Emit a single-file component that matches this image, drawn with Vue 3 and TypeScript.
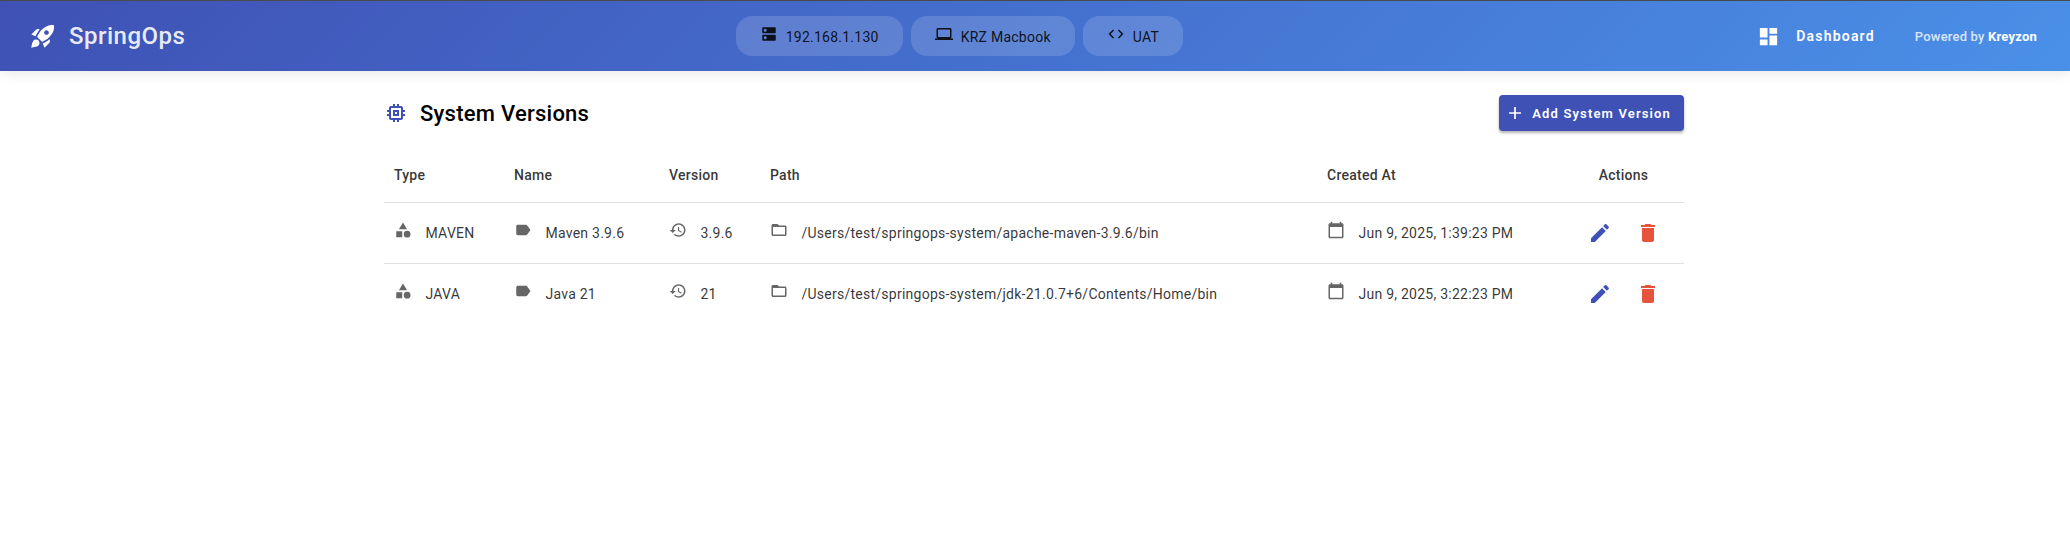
<script setup lang="ts">
interface SystemVersion {
  type: string
  name: string
  version: string
  path: string
  createdAt: string
}

const icons = {
  rocket: 'M9.19 6.35c-2.04 2.29-3.44 5.58-3.57 5.89L2 10.69l4.05-4.05c.47-.47 1.15-.68 1.81-.55l1.33.26zM11.17 17s3.74-1.55 5.89-3.7c5.4-5.4 4.5-9.62 4.21-10.57-.95-.3-5.17-1.19-10.57 4.21C8.55 9.09 7 12.83 7 12.83L11.17 17zm6.48-2.19c-2.29 2.04-5.58 3.44-5.89 3.57L13.31 22l4.05-4.05c.47-.47.68-1.15.55-1.81l-.26-1.33zM9 18c0 .83-.34 1.58-.88 2.12C6.94 21.3 2 22 2 22s.7-4.94 1.88-6.12C4.42 15.34 5.17 15 6 15c1.66 0 3 1.34 3 3zm4-9c0-1.1.9-2 2-2s2 .9 2 2-.9 2-2 2-2-.9-2-2z',
  dns: 'M20 13H4c-.55 0-1 .45-1 1v6c0 .55.45 1 1 1h16c.55 0 1-.45 1-1v-6c0-.55-.45-1-1-1zM7 19c-1.1 0-2-.9-2-2s.9-2 2-2 2 .9 2 2-.9 2-2 2zM20 3H4c-.55 0-1 .45-1 1v6c0 .55.45 1 1 1h16c.55 0 1-.45 1-1V4c0-.55-.45-1-1-1zM7 9c-1.1 0-2-.9-2-2s.9-2 2-2 2 .9 2 2-.9 2-2 2z',
  laptop: 'M20 18c1.1 0 1.99-.9 1.99-2L22 6c0-1.1-.9-2-2-2H4c-1.1 0-2 .9-2 2v10c0 1.1.9 2 2 2H0v2h24v-2h-4zM4 6h16v10H4V6z',
  code: 'M9.4 16.6L4.8 12l4.6-4.6L8 6l-6 6 6 6 1.4-1.4zm5.2 0l4.6-4.6-4.6-4.6L16 6l6 6-6 6-1.4-1.4z',
  dashboard: 'M3 13h8V3H3v10zm0 8h8v-6H3v6zm10 0h8V11h-8v10zm0-18v6h8V3h-8z',
  memory: 'M15 9H9v6h6V9zm-2 4h-2v-2h2v2zm8-2V9h-2V7c0-1.1-.9-2-2-2h-2V3h-2v2h-2V3H9v2H7c-1.1 0-2 .9-2 2v2H3v2h2v2H3v2h2v2c0 1.1.9 2 2 2h2v2h2v-2h2v2h2v-2h2c1.1 0 2-.9 2-2v-2h2v-2h-2v-2h2zm-4 6H7V7h10v10z',
  add: 'M19 13h-6v6h-2v-6H5v-2h6V5h2v6h6v2z',
  category: 'M12 2l-5.5 9h11L12 2zM17.5 13a4.5 4.5 0 1 0 0 9 4.5 4.5 0 0 0 0-9zM3 13.5h8v8H3z',
  label: 'M17.63 5.84C17.27 5.33 16.67 5 16 5L5 5.01C3.9 5.01 3 5.9 3 7v10c0 1.1.9 1.99 2 1.99L16 19c.67 0 1.27-.33 1.63-.84L22 12l-4.37-6.16z',
  history: 'M13 3c-4.97 0-9 4.03-9 9H1l3.89 3.89.07.14L9 12H6c0-3.87 3.13-7 7-7s7 3.13 7 7-3.13 7-7 7c-1.93 0-3.68-.79-4.94-2.06l-1.42 1.42C8.27 19.99 10.51 21 13 21c4.97 0 9-4.03 9-9s-4.03-9-9-9zm-1 5v5l4.28 2.54.72-1.21-3.5-2.08V8H12z',
  folder: 'M20 6h-8l-2-2H4c-1.1 0-1.99.9-1.99 2L2 18c0 1.1.9 2 2 2h16c1.1 0 2-.9 2-2V8c0-1.1-.9-2-2-2zm0 12H4V8h16v10z',
  calendar: 'M20 3h-1V1h-2v2H7V1H5v2H4c-1.1 0-2 .9-2 2v16c0 1.1.9 2 2 2h16c1.1 0 2-.9 2-2V5c0-1.1-.9-2-2-2zm0 18H4V8h16v13z',
  edit: 'M3 17.25V21h3.75L17.81 9.94l-3.75-3.75L3 17.25zM20.71 7.04c.39-.39.39-1.02 0-1.41l-2.34-2.34c-.39-.39-1.02-.39-1.41 0l-1.83 1.83 3.75 3.75 1.83-1.83z',
  delete: 'M6 19c0 1.1.9 2 2 2h8c1.1 0 2-.9 2-2V7H6v12zM19 4h-3.5l-1-1h-5l-1 1H5v2h14V4z',
}

const chips = [
  { icon: icons.dns, label: '192.168.1.130' },
  { icon: icons.laptop, label: 'KRZ Macbook' },
  { icon: icons.code, label: 'UAT' },
]

const versions: SystemVersion[] = [
  {
    type: 'MAVEN',
    name: 'Maven 3.9.6',
    version: '3.9.6',
    path: '/Users/test/springops-system/apache-maven-3.9.6/bin',
    createdAt: 'Jun 9, 2025, 1:39:23 PM',
  },
  {
    type: 'JAVA',
    name: 'Java 21',
    version: '21',
    path: '/Users/test/springops-system/jdk-21.0.7+6/Contents/Home/bin',
    createdAt: 'Jun 9, 2025, 3:22:23 PM',
  },
]
</script>

<template>
  <div class="page">
    <header class="toolbar">
      <div class="brand">
        <svg class="brand-icon" viewBox="0 0 24 24"><path :d="icons.rocket" /></svg>
        <span>SpringOps</span>
      </div>

      <div class="chips">
        <div v-for="chip in chips" :key="chip.label" class="chip">
          <svg class="chip-icon" viewBox="0 0 24 24"><path :d="chip.icon" /></svg>
          <span>{{ chip.label }}</span>
        </div>
      </div>

      <div class="toolbar-right">
        <a class="nav-link">
          <svg class="nav-icon" viewBox="0 0 24 24"><path :d="icons.dashboard" /></svg>
          <span>Dashboard</span>
        </a>
        <span class="powered">Powered by <strong>Kreyzon</strong></span>
      </div>
    </header>

    <main class="content">
      <div class="title-row">
        <div class="title">
          <svg class="title-icon" viewBox="0 0 24 24"><path :d="icons.memory" /></svg>
          <h1>System Versions</h1>
        </div>
        <button class="add-btn" type="button">
          <svg viewBox="0 0 24 24"><path :d="icons.add" /></svg>
          <span>Add System Version</span>
        </button>
      </div>

      <table class="versions">
        <colgroup>
          <col style="width: 120px" />
          <col style="width: 155px" />
          <col style="width: 101px" />
          <col style="width: 557px" />
          <col style="width: 246px" />
          <col style="width: 121px" />
        </colgroup>
        <thead>
          <tr>
            <th>Type</th>
            <th>Name</th>
            <th>Version</th>
            <th>Path</th>
            <th>Created At</th>
            <th class="center">Actions</th>
          </tr>
        </thead>
        <tbody>
          <tr v-for="row in versions" :key="row.name">
            <td>
              <div class="cell">
                <svg class="cell-icon" viewBox="0 0 24 24"><path :d="icons.category" /></svg>
                <span>{{ row.type }}</span>
              </div>
            </td>
            <td>
              <div class="cell">
                <svg class="cell-icon" viewBox="0 0 24 24"><path :d="icons.label" /></svg>
                <span>{{ row.name }}</span>
              </div>
            </td>
            <td>
              <div class="cell">
                <svg class="cell-icon" viewBox="0 0 24 24"><path :d="icons.history" /></svg>
                <span>{{ row.version }}</span>
              </div>
            </td>
            <td>
              <div class="cell">
                <svg class="cell-icon" viewBox="0 0 24 24"><path :d="icons.folder" /></svg>
                <span>{{ row.path }}</span>
              </div>
            </td>
            <td>
              <div class="cell">
                <svg class="cell-icon" viewBox="0 0 24 24"><path :d="icons.calendar" /></svg>
                <span>{{ row.createdAt }}</span>
              </div>
            </td>
            <td>
              <div class="actions">
                <svg class="edit" viewBox="0 0 24 24"><path :d="icons.edit" /></svg>
                <svg class="delete" viewBox="0 0 24 24"><path :d="icons.delete" /></svg>
              </div>
            </td>
          </tr>
        </tbody>
      </table>
    </main>
  </div>
</template>

<style>
body {
  background: #fff;
}
</style>

<style scoped>
.page {
  font-family: Roboto, "Liberation Sans", sans-serif;
  color: rgba(0, 0, 0, 0.87);
}

svg {
  display: block;
  fill: currentColor;
  flex: none;
}

.toolbar {
  display: flex;
  align-items: center;
  justify-content: space-between;
  box-sizing: border-box;
  height: 71px;
  padding: 0 33px 0 29px;
  border-top: 1px solid #4a4a4a;
  background: linear-gradient(135deg, #3f51b5 0%, #4a90e8 100%);
  box-shadow: 0 2px 12px rgba(0, 0, 0, 0.1);
}

.brand {
  display: flex;
  align-items: center;
  gap: 12px;
  font-size: 24px;
  font-weight: 500;
  letter-spacing: 0.5px;
  color: rgba(255, 255, 255, 0.9);
}

.brand-icon {
  width: 28px;
  height: 28px;
  color: #fff;
}

.chips {
  display: flex;
  gap: 8px;
}

.chip {
  display: flex;
  align-items: center;
  gap: 8px;
  box-sizing: border-box;
  height: 40px;
  padding: 2px 24px 0;
  border-radius: 16px;
  background: rgba(255, 255, 255, 0.15);
  font-size: 14px;
  letter-spacing: 0.25px;
}

.chip-icon {
  width: 18px;
  height: 18px;
  margin-bottom: 6px;
}

.toolbar-right {
  display: flex;
  align-items: center;
  gap: 40px;
}

.nav-link {
  display: flex;
  align-items: center;
  gap: 16px;
  padding-left: 24px;
  color: #fff;
  font-size: 14px;
  font-weight: 600;
  letter-spacing: 1.2px;
}

.nav-icon {
  width: 23px;
  height: 23px;
}

.powered {
  font-size: 13px;
  font-weight: 500;
  letter-spacing: 0.2px;
  color: rgba(255, 255, 255, 0.8);
}

.powered strong {
  font-weight: 700;
  color: #fff;
}

.content {
  width: 1300px;
  margin-left: 384px;
  padding-top: 24px;
}

.title-row {
  display: flex;
  align-items: center;
  justify-content: space-between;
  height: 36px;
}

.title {
  display: flex;
  align-items: center;
  gap: 12px;
}

.title-icon {
  width: 24px;
  height: 24px;
  color: #3f51b5;
}

.title h1 {
  margin: 0;
  font-size: 22px;
  font-weight: 500;
  letter-spacing: 0.25px;
  color: #000;
}

.add-btn {
  display: flex;
  align-items: center;
  gap: 5px;
  height: 36px;
  padding: 0 13px 0 4px;
  border: 0;
  border-radius: 4px;
  background: #3f51b5;
  color: #fff;
  font-family: inherit;
  font-size: 13px;
  font-weight: 600;
  letter-spacing: 1.15px;
  box-shadow: 0 2px 3px rgba(0, 0, 0, 0.3);
}

.add-btn svg {
  width: 24px;
  height: 24px;
  transform: scale(0.85);
}

.versions {
  width: 100%;
  margin-top: 9px;
  border-collapse: collapse;
  table-layout: fixed;
  font-size: 14px;
}

.versions th {
  height: 62px;
  padding: 8px 10px 0;
  box-sizing: border-box;
  font-weight: 500;
  text-align: left;
  letter-spacing: 0.25px;
  color: rgba(0, 0, 0, 0.8);
  border-bottom: 1px solid #e0e0e0;
}

.versions th.center {
  text-align: center;
}

.versions td {
  height: 60px;
  padding: 0 10px;
  border-bottom: 1px solid #e0e0e0;
  letter-spacing: 0.25px;
}

.versions tbody tr:last-child td {
  border-bottom: 0;
}

.cell {
  display: flex;
  align-items: center;
  gap: 13.5px;
  color: rgba(0, 0, 0, 0.8);
}

.cell-icon {
  width: 18px;
  height: 18px;
  margin-bottom: 6px;
  color: #666;
}

.actions {
  display: flex;
  justify-content: center;
  gap: 24px;
}

.actions svg {
  width: 24px;
  height: 24px;
}

.edit {
  color: #3f51b5;
}

.delete {
  color: #e5533d;
}
</style>
